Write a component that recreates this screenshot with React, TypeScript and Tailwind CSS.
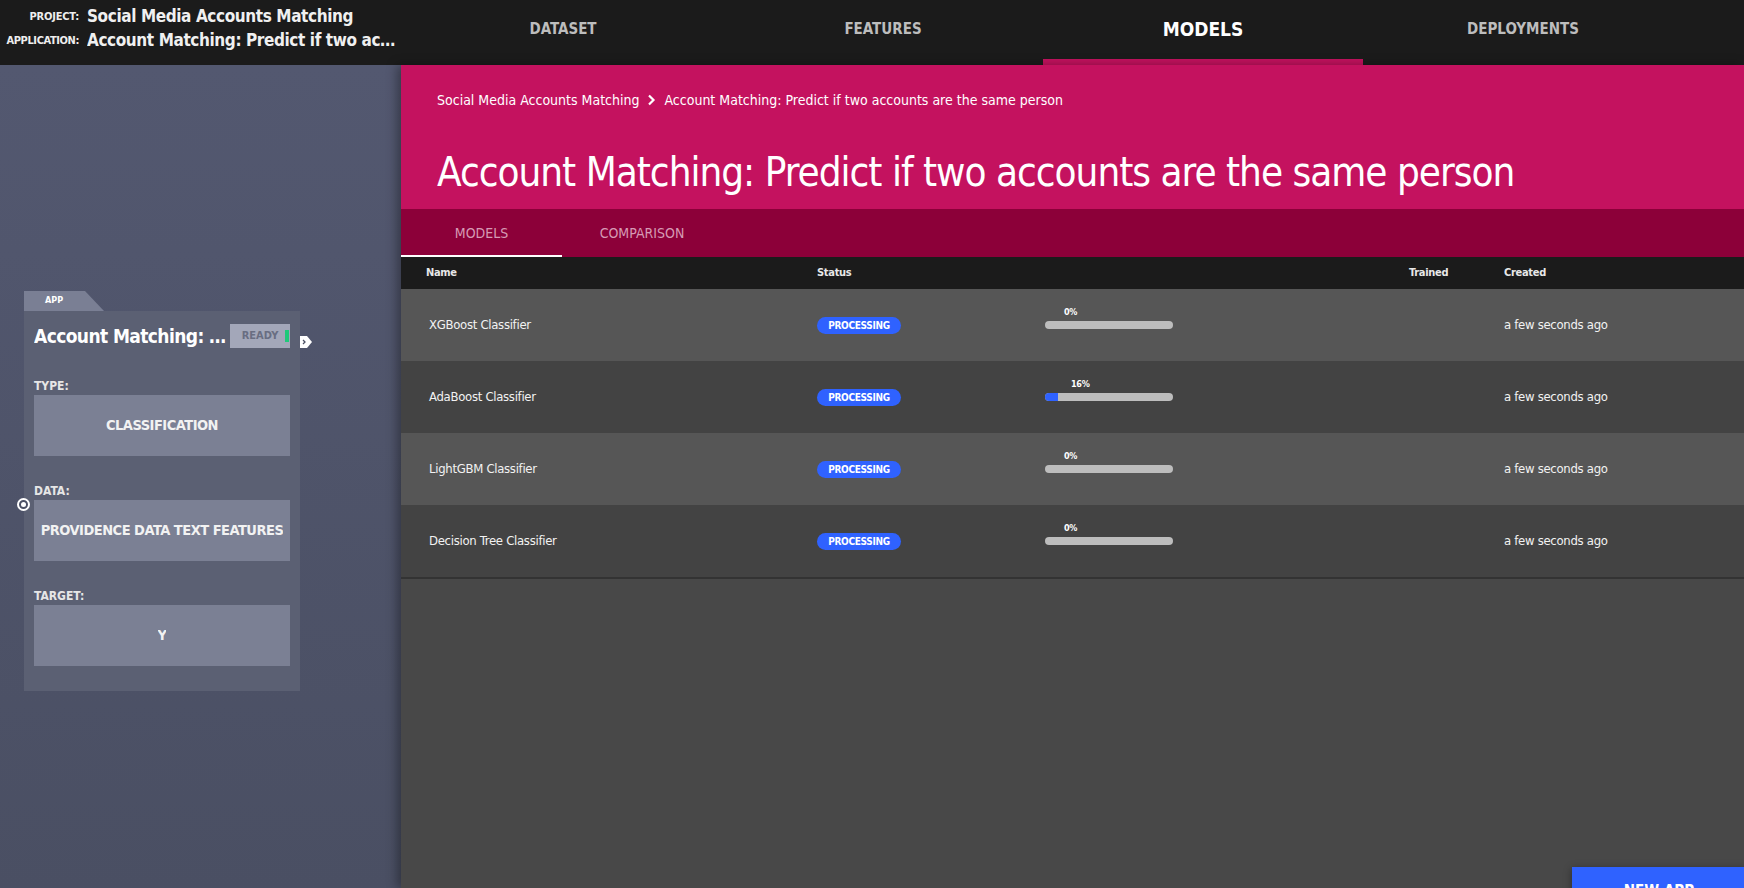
import React from "react";

const navTabs = [
  {label: "DATASET", active: false},
  {label: "FEATURES", active: false},
  {label: "MODELS", active: true},
  {label: "DEPLOYMENTS", active: false},
];

const models = [
  {name: "XGBoost Classifier", pct: 0, fill: 0},
  {name: "AdaBoost Classifier", pct: 16, fill: 10},
  {name: "LightGBM Classifier", pct: 0, fill: 0},
  {name: "Decision Tree Classifier", pct: 0, fill: 0},
];

function Progress({pct, fill}: {pct: number; fill: number}) {
  return (
    <div className="relative w-[128px] h-[8px] rounded-full bg-[#bdbdbd]">
      {fill > 0 && (
        <div className="absolute left-0 top-0 h-full rounded-l-full bg-[#2f62ff]" style={{width: `${fill}%`}} />
      )}
      <span
        className="absolute -top-[15px] text-[9px] font-bold leading-[12px] tracking-[-0.3px] text-white"
        style={{left: `${19 + pct * 0.44}px`}}
      >
        {pct}%
      </span>
    </div>
  );
}

function Field({label, value}: {label: string; value: string}) {
  return (
    <div className="flex flex-col">
      <div className="h-[16px] text-[12px] leading-[16px] font-bold text-[#e6e6e6]">{label}</div>
      <div className="mt-[1px] h-[61px] bg-[#7b8094] flex items-center justify-center px-[4px] text-[14.5px] font-bold tracking-[-0.5px] text-[#f2f2f2]">
        <span className="truncate">{value}</span>
      </div>
    </div>
  );
}

function AppCard() {
  return (
    <div className="ml-[24px] mt-[226px] w-[276px]">
      <div className="h-[20px] w-[80px] bg-[#7a7f94] [clip-path:polygon(0_0,61px_0,80px_100%,0_100%)] flex items-center pl-[21px] text-[9px] font-bold text-white">
        APP
      </div>
      <div className="relative bg-[#5b6073] px-[10px] pt-[13px] pb-[25px]">
        <div className="flex items-center h-[24px] gap-[3px]">
          <div className="flex-1 min-w-0 truncate text-[19px] leading-[24px] font-bold tracking-[-0.6px] text-white">Account Matching: Predict if two accounts are the same person</div>
          <div className="relative shrink-0 w-[60px] h-[24px] bg-[#a3a7b9] flex items-center justify-center text-[11px] font-bold text-[#696e82]">
            READY
            <span className="absolute right-[1px] top-[6px] w-[4px] h-[12px] bg-[#1fc97a]" />
          </div>
        </div>
        <svg className="absolute right-[-12px] top-[25px]" width="12" height="12" viewBox="0 0 12 12">
          <path d="M0 0H7L12 6L7 12H0Z" fill="#ffffff" />
          <path d="M3 4L5 6L3 8" stroke="#4b5064" strokeWidth="1.3" fill="none" />
        </svg>
        <span className="absolute left-[-7px] top-[187px] w-[13px] h-[13px] rounded-full border-2 border-white bg-[#4b5064] flex items-center justify-center">
          <span className="w-[5px] h-[5px] rounded-full bg-white" />
        </span>
        <div className="mt-[30px] flex flex-col gap-[27px]">
          <Field label="TYPE:" value="CLASSIFICATION" />
          <Field label="DATA:" value="PROVIDENCE DATA TEXT FEATURES" />
          <Field label="TARGET:" value="Y" />
        </div>
      </div>
    </div>
  );
}

export default function App() {
  return (
    <div className="relative w-[1744px] h-[888px] overflow-hidden flex flex-col bg-[#484848] font-['DejaVu_Sans_Condensed','DejaVu_Sans',Roboto,sans-serif]">
      <header className="h-[65px] shrink-0 flex bg-[#1b1b1b]">
        <div className="w-[403px] shrink-0 pt-[5px] grid grid-cols-[79px_minmax(0,1fr)] gap-x-[8px] auto-rows-[24px] items-center">
          <div className="text-right text-[11px] font-bold tracking-[-0.2px] text-[#eeeeee]">PROJECT:</div>
          <div className="truncate text-[17px] font-bold tracking-[-0.4px] text-[#f0f0f0]">Social Media Accounts Matching</div>
          <div className="text-right text-[11px] font-bold tracking-[-0.4px] text-[#eeeeee]">APPLICATION:</div>
          <div className="truncate text-[17px] font-bold tracking-[-0.4px] text-[#f0f0f0]">Account Matching: Predict if two accounts are the same person</div>
        </div>
        <nav className="flex">
          {navTabs.map((t) => (
            <div key={t.label} className="relative w-[320px] h-full flex items-center justify-center pb-[6px]">
              <span className={t.active ? "text-[19px] font-bold text-white" : "text-[15px] font-bold text-[#bdbdbd]"}>{t.label}</span>
              {t.active && <span className="absolute left-0 right-0 bottom-0 h-[6px] bg-[#c4125f]" />}
            </div>
          ))}
        </nav>
      </header>

      <div className="flex flex-1 min-h-0">
        <aside className="w-[401px] shrink-0 bg-gradient-to-b from-[#535870] to-[#4a4f63]">
          <AppCard />
        </aside>

        <main className="relative z-10 flex-1 flex flex-col bg-[#484848] shadow-[-4px_0_10px_rgba(0,0,0,0.35)]">
          <section className="h-[144px] shrink-0 bg-[#c4125f] pl-[36px] pt-[26px] text-white">
            <div className="flex items-center h-[18px] text-[14px]">
              <span>Social Media Accounts Matching</span>
              <svg className="mx-[8px]" width="9" height="12" viewBox="0 0 9 12">
                <path d="M2 1.5L6.5 6L2 10.5" stroke="#ffffff" strokeWidth="2.2" fill="none" />
              </svg>
              <span>Account Matching: Predict if two accounts are the same person</span>
            </div>
            <h1 className="mt-[39px] text-[40px] leading-[48px] tracking-[-1px]">Account Matching: Predict if two accounts are the same person</h1>
          </section>

          <div className="h-[48px] shrink-0 flex bg-[#8c0039]">
            <div className="relative w-[161px] flex items-center justify-center text-[14px] text-[#d69ab4]">
              MODELS
              <span className="absolute left-0 right-0 bottom-0 h-[2px] bg-white" />
            </div>
            <div className="w-[160px] flex items-center justify-center text-[14px] text-[#d69ab4]">COMPARISON</div>
          </div>

          <div className="h-[32px] shrink-0 pl-[25px] grid grid-cols-[391px_228px_364px_95px_1fr] items-center bg-[#1b1b1b] text-[11px] font-bold tracking-[-0.3px] text-[#e8e8e8]">
            <span>Name</span>
            <span>Status</span>
            <span />
            <span>Trained</span>
            <span>Created</span>
          </div>

          <div className="border-b-2 border-[#333333]">
            {models.map((m, i) => (
              <div
                key={m.name}
                className={`h-[72px] pl-[28px] grid grid-cols-[388px_228px_364px_95px_1fr] items-center text-[13px] tracking-[-0.3px] text-[#f2f2f2] ${i % 2 === 0 ? "bg-[#565656]" : "bg-[#434343]"}`}
              >
                <span>{m.name}</span>
                <span className="w-[84px] h-[17px] rounded-full bg-[#2f62ff] flex items-center justify-center text-[10px] font-bold tracking-[-0.3px] text-white">PROCESSING</span>
                <Progress pct={m.pct} fill={m.fill} />
                <span />
                <span>a few seconds ago</span>
              </div>
            ))}
          </div>
        </main>
      </div>

      <button className="absolute left-[1572px] top-[867px] w-[174px] h-[48px] bg-[#2f62ff] text-white text-[15px] font-bold shadow-[0_2px_8px_rgba(0,0,0,0.4)] z-20">
        NEW APP
      </button>
    </div>
  );
}
